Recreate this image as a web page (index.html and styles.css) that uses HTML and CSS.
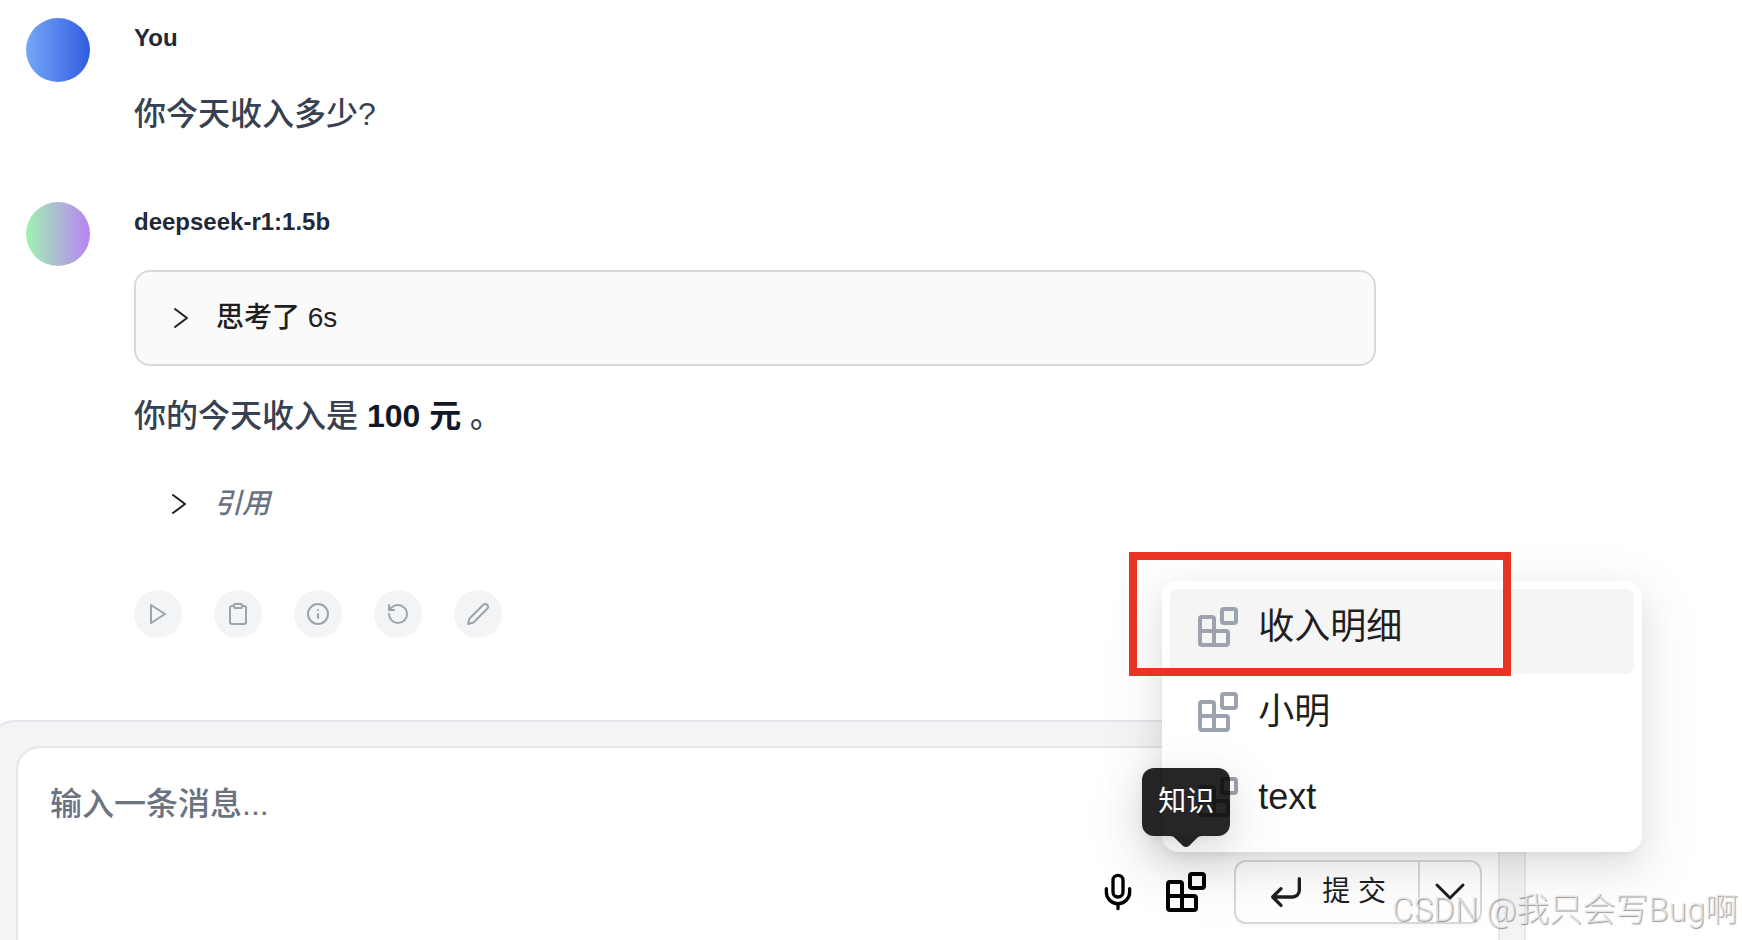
FILE: index.html
```html
<!DOCTYPE html>
<html lang="zh-CN">
  <head>
    <meta charset="UTF-8" />
    <meta name="viewport" content="width=device-width, initial-scale=1.0" />
    <title>Chat</title>
    <link rel="stylesheet" href="styles.css">
  </head>
  <body>
    <svg class="sprite" aria-hidden="true">
      <symbol id="blocks" viewBox="0 0 24 24">
        <rect x="14" y="3" width="7" height="7" rx="1" />
        <path d="M10 21V8a1 1 0 0 0-1-1H4a1 1 0 0 0-1 1v12a1 1 0 0 0 1 1h12a1 1 0 0 0 1-1v-5a1 1 0 0 0-1-1H3" />
      </symbol>
      <symbol id="chevron" viewBox="0 0 24 24">
        <path d="M7 3l12 9-12 9" />
      </symbol>
    </svg>

    <main class="chat">
      <section class="message">
        <div class="avatar avatar-user"></div>
        <div class="message-body">
          <h2 class="name">You</h2>
          <p class="text">你今天收入多少?</p>
        </div>
      </section>

      <section class="message">
        <div class="avatar avatar-bot"></div>
        <div class="message-body">
          <h2 class="name">deepseek-r1:1.5b</h2>
          <button class="toggle thinking">
            <svg class="toggle-icon"><use href="#chevron" /></svg>
            <span>思考了 6s</span>
          </button>
          <p class="text">你的今天收入是 <strong>100 元</strong> 。</p>
          <button class="toggle quote">
            <svg class="toggle-icon"><use href="#chevron" /></svg>
            <em>引用</em>
          </button>
          <div class="actions">
            <button class="action" aria-label="播放">
              <svg viewBox="0 0 24 24"><polygon points="5 3 19 12 5 21 5 3" /></svg>
            </button>
            <button class="action" aria-label="复制">
              <svg viewBox="0 0 24 24">
                <rect x="8" y="2" width="8" height="4" rx="1" />
                <path d="M16 4h2a2 2 0 0 1 2 2v14a2 2 0 0 1-2 2H6a2 2 0 0 1-2-2V6a2 2 0 0 1 2-2h2" />
              </svg>
            </button>
            <button class="action" aria-label="信息">
              <svg viewBox="0 0 24 24">
                <circle cx="12" cy="12" r="10" />
                <path d="M12 16v-4M12 8h.01" />
              </svg>
            </button>
            <button class="action" aria-label="重新生成">
              <svg viewBox="0 0 24 24">
                <path d="M3 12a9 9 0 1 0 9-9 9.75 9.75 0 0 0-6.74 2.74L3 8" />
                <path d="M3 3v5h5" />
              </svg>
            </button>
            <button class="action" aria-label="编辑">
              <svg viewBox="0 0 24 24"><path d="M17 3a2.85 2.83 0 1 1 4 4L7.5 20.5 2 22l1.5-5.500Z" /></svg>
            </button>
          </div>
        </div>
      </section>

      <form class="composer">
        <div class="composer-inner">
          <textarea class="input" rows="1" placeholder="输入一条消息..." aria-label="输入一条消息"></textarea>
          <div class="toolbar">
            <button type="button" class="tool" aria-label="语音">
              <svg class="mic" viewBox="0 0 24 24">
                <path d="M12 2a3 3 0 0 0-3 3v7a3 3 0 0 0 6 0V5a3 3 0 0 0-3-3Z" />
                <path d="M19 10v2a7 7 0 0 1-14 0v-2M12 19v3" />
              </svg>
            </button>

            <div class="knowledge">
              <button type="button" class="tool" aria-label="知识">
                <svg class="blocks"><use href="#blocks" /></svg>
              </button>
              <ul class="menu">
                <li>
                  <button type="button" class="menu-item active"><svg class="blocks"><use href="#blocks" /></svg>收入明细</button>
                  <div class="marker"></div>
                </li>
                <li>
                  <button type="button" class="menu-item"><svg class="blocks"><use href="#blocks" /></svg>小明</button>
                </li>
                <li>
                  <button type="button" class="menu-item"><svg class="blocks"><use href="#blocks" /></svg>text</button>
                </li>
              </ul>
              <div class="tooltip" role="tooltip">
                知识
                <svg class="tooltip-arrow" viewBox="0 0 32 12"><path d="M0 0h32c-3 0-4 1-6 3l-7 7q-3 2-6 0L6 3C4 1 3 0 0 0Z" /></svg>
              </div>
            </div>

            <div class="submit-group">
              <button type="submit" class="submit">
                <svg viewBox="0 0 24 24"><path d="M20 4v7a4 4 0 0 1-4 4H4M9 10l-5 5 5 5" /></svg>
                <span>提 交</span>
              </button>
              <button type="button" class="more" aria-label="更多">
                <svg viewBox="0 0 32 32"><path d="M3 9l13 13L29 9" /></svg>
              </button>
            </div>
          </div>
        </div>
      </form>
    </main>

    <div class="watermark">CSDN @我只会写Bug啊</div>
  </body>
</html>
```

FILE: styles.css
```css
* {
  margin: 0;
  padding: 0;
  box-sizing: border-box;
}

body {
  height: 100vh;
  overflow: hidden;
  background-color: #fff;
  color: #1f1f1f;
  font-family: "Liberation Sans", "Noto Sans CJK SC", sans-serif;
  font-size: 28px;
  line-height: 40px;
}

button {
  border: none;
  background: none;
  color: inherit;
  font: inherit;
  cursor: pointer;
}

svg {
  flex: none;
  fill: none;
  stroke: currentColor;
  stroke-width: 2;
  stroke-linecap: round;
  stroke-linejoin: round;
}

.sprite {
  display: none;
}

.chat {
  display: flex;
  flex-direction: column;
  height: 100%;
  margin-right: 216px;
  padding-top: 18px;
}

/* Messages */
.message {
  display: flex;
  gap: 44px;
  margin: 0 150px 60px 26px;
}

.avatar {
  flex: none;
  width: 64px;
  height: 64px;
  border-radius: 50%;
}

.avatar-user {
  background: linear-gradient(to right, #74a7f7, #315ce0);
}

.avatar-bot {
  background: linear-gradient(to right, #9ff3b0, #b982f5);
}

.message-body {
  display: flex;
  flex: 1;
  flex-direction: column;
}

.name {
  margin-bottom: 28px;
  color: #1f2937;
  font-size: 24px;
}

.text {
  color: #374151;
  font-size: 32px;
  font-weight: 500;
  line-height: 56px;
}

.text strong {
  color: #111827;
  font-weight: 600;
}

.toggle {
  display: flex;
  align-items: center;
  gap: 24px;
  padding: 0 32px;
  font-weight: 500;
}

.toggle-icon {
  width: 24px;
  height: 24px;
}

.thinking {
  height: 96px;
  margin-bottom: 22px;
  border: 2px solid #d9d9d9;
  border-radius: 16px;
  background-color: #fafafa;
}

.quote {
  margin: 40px 0 66px;
}

.quote em {
  color: #6b7280;
}

.actions {
  display: flex;
  gap: 32px;
  margin-bottom: 22px;
}

.action {
  display: flex;
  align-items: center;
  justify-content: center;
  width: 48px;
  height: 48px;
  border-radius: 50%;
  background-color: #f3f4f6;
  color: #9ca3af;
}

.action svg {
  width: 24px;
  height: 24px;
}

/* Composer */
.composer {
  display: flex;
  flex: 1 0 auto;
  margin-left: -10px;
  padding: 24px 24px 0;
  border: 2px solid #e5e7eb;
  border-bottom: none;
  border-radius: 24px 24px 0 0;
  background-color: #f3f4f6;
}

.composer-inner {
  flex: 1;
  border: 2px solid #e5e7eb;
  border-bottom: none;
  border-radius: 24px 24px 0 0;
  background-color: #fff;
}

.input {
  display: block;
  width: 100%;
  height: 112px;
  padding: 36px 32px;
  border: none;
  outline: none;
  resize: none;
  overflow: hidden;
  background: none;
  font: inherit;
  font-size: 32px;
  font-weight: 500;
  line-height: 40px;
}

.input::placeholder {
  color: #6b7280;
}

.toolbar {
  display: flex;
  align-items: center;
  justify-content: flex-end;
  gap: 24px;
  padding-right: 16px;
}

.tool {
  display: block;
  color: #000;
}

.tool svg,
.menu-item svg {
  display: block;
}

.mic {
  width: 40px;
  height: 40px;
}

.blocks {
  width: 48px;
  height: 48px;
}

.submit-group {
  display: flex;
  height: 64px;
  border: 2px solid #d9d9d9;
  border-radius: 12px;
  box-shadow: 0 4px 0 rgba(0, 0, 0, 0.02);
}

.submit {
  display: flex;
  align-items: center;
  gap: 16px;
  padding: 0 32px 0 30px;
}

.submit svg {
  width: 40px;
  height: 40px;
}

.more {
  display: flex;
  align-items: center;
  justify-content: center;
  width: 62px;
  border-left: 2px solid #d9d9d9;
}

.more svg {
  width: 32px;
  height: 32px;
  stroke-width: 3;
}

/* Knowledge menu */
.knowledge {
  position: relative;
}

.menu {
  position: absolute;
  bottom: 64px;
  left: 0;
  width: 480px;
  padding: 8px;
  border-radius: 16px;
  background-color: #fff;
  box-shadow: 0 12px 32px rgba(0, 0, 0, 0.08), 0 6px 12px -8px rgba(0, 0, 0, 0.12), 0 18px 56px 16px rgba(0, 0, 0, 0.05);
  list-style: none;
}

.menu li {
  position: relative;
}

.menu-item {
  display: flex;
  align-items: flex-start;
  gap: 16px;
  width: 100%;
  height: 85px;
  padding: 14px 24px;
  border-radius: 8px;
  font-size: 36px;
  line-height: 48px;
}

.menu-item.active {
  background-color: #f5f5f5;
}

.menu-item svg {
  color: #9ca3af;
}

.marker {
  position: absolute;
  top: -37px;
  left: -41px;
  width: 382px;
  height: 124px;
  border: 8px solid #e93323;
  pointer-events: none;
}

.tooltip {
  position: absolute;
  bottom: 80px;
  left: 50%;
  padding: 12px 16px;
  border-radius: 12px;
  background-color: rgba(0, 0, 0, 0.85);
  box-shadow: 0 12px 32px rgba(0, 0, 0, 0.08), 0 6px 12px -8px rgba(0, 0, 0, 0.12), 0 18px 56px 16px rgba(0, 0, 0, 0.05);
  color: #fff;
  line-height: 44px;
  white-space: nowrap;
  transform: translateX(-50%);
}

.tooltip-arrow {
  position: absolute;
  top: 100%;
  left: 50%;
  width: 32px;
  height: 12px;
  margin-left: -16px;
  fill: rgba(0, 0, 0, 0.85);
  stroke: none;
}

.watermark {
  position: absolute;
  right: 4px;
  bottom: 8px;
  color: rgba(235, 235, 235, 0.8);
  font-family: Roboto, "Noto Sans CJK SC", sans-serif;
  font-size: 33px;
  font-weight: 300;
  line-height: 44px;
  text-shadow: 1px 1px 1px rgba(0, 0, 0, 0.4);
}
```
